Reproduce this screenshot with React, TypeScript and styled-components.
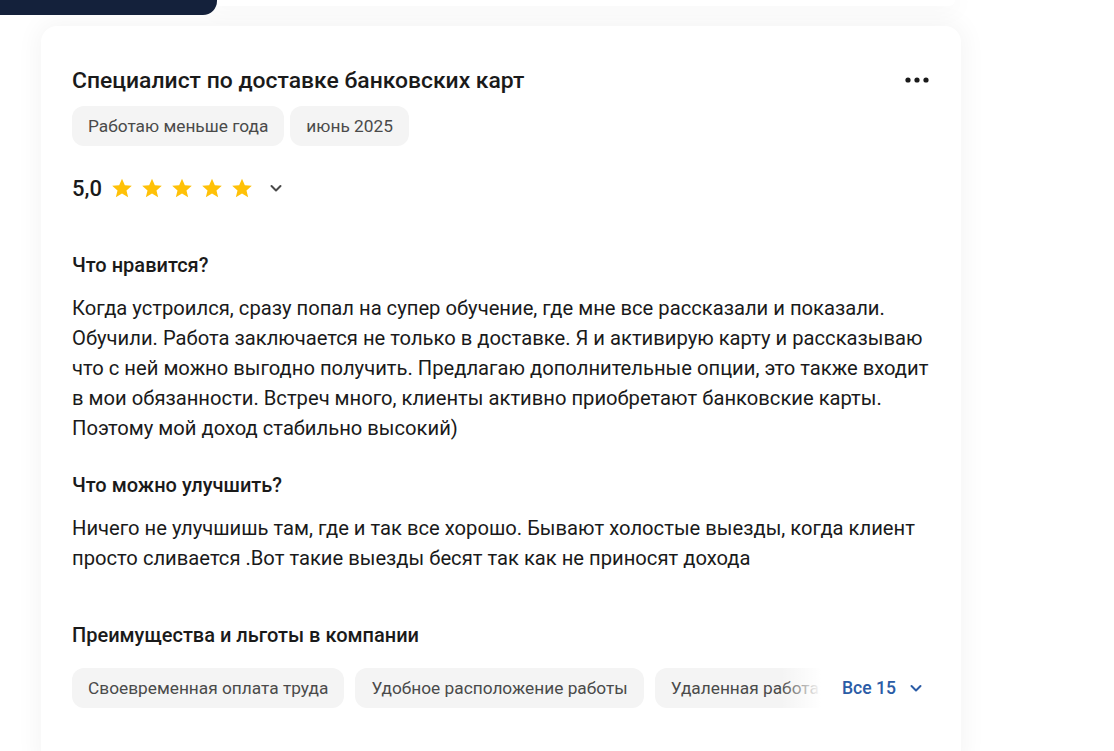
import styled, { createGlobalStyle } from 'styled-components';

const GlobalStyle = createGlobalStyle`
  body {
    margin: 0;
    background: #fff;
    font-family: Roboto, "Noto Sans", Arial, sans-serif;
    color: #1a1a1a;
  }
`;

const Page = styled.div`
  width: 1114px;
  height: 751px;
  overflow: hidden;
`;

const TopRow = styled.div`
  display: flex;
  align-items: flex-start;
`;

const DarkTab = styled.div`
  width: 217px;
  height: 15px;
  background: #14213b;
  border-bottom-right-radius: 14px;
  position: relative;
  z-index: 1;
`;

const PrevCard = styled.div`
  width: 742px;
  height: 6px;
  margin-left: -4px;
  background: #fff;
  border-bottom-right-radius: 14px;
  box-shadow: 0 0 24px 4px rgba(0, 0, 0, 0.045);
`;

const Card = styled.article`
  margin: 11px 0 0 41px;
  width: 920px;
  box-sizing: border-box;
  padding: 40px 23px 60px 31px;
  background: #fff;
  border-radius: 16px;
  box-shadow: 0 0 24px 4px rgba(0, 0, 0, 0.045);
`;

const Header = styled.div`
  display: flex;
  justify-content: space-between;
  align-items: flex-start;
  padding-right: 9px;
`;

const Title = styled.h2`
  margin: 0;
  font-size: 22.9px;
  line-height: 30px;
  font-weight: 500;
  color: #1a1a1a;
`;

const MoreButton = styled.button`
  border: 0;
  background: none;
  padding: 0;
  margin-top: 4px;
  width: 24px;
  height: 20px;
  display: flex;
  align-items: center;
  justify-content: center;
  cursor: pointer;
`;

const Tags = styled.div`
  display: flex;
  gap: 6px;
  margin-top: 10px;
`;

const Tag = styled.span`
  flex-shrink: 0;
  display: inline-flex;
  align-items: center;
  height: 40px;
  padding: 0 16px;
  border-radius: 12px;
  background: #f4f4f4;
  font-size: 17.3px;
  color: #4a4a4a;
  white-space: nowrap;
`;

const Rating = styled.div`
  display: flex;
  align-items: center;
  margin-top: 28px;
  height: 28px;
`;

const Score = styled.span`
  font-size: 22px;
  font-weight: 500;
  margin-right: 9px;
`;

const Stars = styled.div`
  display: flex;
  gap: 8px;
  margin-right: 16px;
`;

const Section = styled.section<{ $top: number }>`
  margin-top: ${({ $top }) => $top}px;
`;

const Heading = styled.h3`
  margin: 0;
  font-size: 20px;
  line-height: 24px;
  font-weight: 500;
`;

const Text = styled.p`
  margin: 16px 0 0;
  font-size: 20.2px;
  line-height: 30px;
  color: #1a1a1a;
`;

const Benefits = styled.div`
  display: flex;
  align-items: center;
  margin-top: 21px;
`;

const BenefitList = styled.div`
  position: relative;
  width: 759px;
  overflow: hidden;
  display: flex;
  gap: 11px;

  &::after {
    content: '';
    position: absolute;
    top: 0;
    right: 0;
    width: 50px;
    height: 100%;
    background: linear-gradient(to right, rgba(255, 255, 255, 0), #fff 80%);
  }
`;

const AllButton = styled.button`
  border: 0;
  background: none;
  padding: 0;
  margin-left: 11px;
  display: flex;
  align-items: center;
  gap: 13px;
  font-family: inherit;
  font-size: 17.6px;
  font-weight: 500;
  color: #2b5ca6;
  cursor: pointer;
`;

const Star = () => (
  <svg width="22" height="22" viewBox="0 0 24 24">
    <path
      fill="#ffc107"
      d="M12 1.8l3.1 7.1 7.6.7-5.8 5 1.8 7.5L12 18.1l-6.7 4 1.8-7.5-5.8-5 7.6-.7z"
    />
  </svg>
);

const Chevron = ({ color }: { color: string }) => (
  <svg width="14" height="14" viewBox="0 0 14 14">
    <path d="M2.5 5l4.5 4.5L11.5 5" fill="none" stroke={color} strokeWidth="2" strokeLinecap="round" strokeLinejoin="round" />
  </svg>
);

const Dots = () => (
  <svg width="24" height="6" viewBox="0 0 24 6">
    <circle cx="3" cy="3" r="2.6" fill="#1a1a1a" />
    <circle cx="12" cy="3" r="2.6" fill="#1a1a1a" />
    <circle cx="21" cy="3" r="2.6" fill="#1a1a1a" />
  </svg>
);

const benefits = ['Своевременная оплата труда', 'Удобное расположение работы', 'Удаленная работа'];

export default function App() {
  return (
    <Page>
      <GlobalStyle />
      <TopRow>
        <DarkTab />
        <PrevCard />
      </TopRow>
      <Card>
        <Header>
          <Title>Специалист по доставке банковских карт</Title>
          <MoreButton aria-label="Ещё">
            <Dots />
          </MoreButton>
        </Header>
        <Tags>
          <Tag>Работаю меньше года</Tag>
          <Tag>июнь 2025</Tag>
        </Tags>
        <Rating>
          <Score>5,0</Score>
          <Stars>
            {[0, 1, 2, 3, 4].map((i) => (
              <Star key={i} />
            ))}
          </Stars>
          <Chevron color="#4a4a4a" />
        </Rating>
        <Section $top={51}>
          <Heading>Что нравится?</Heading>
          <Text>
            Когда устроился, сразу попал на супер обучение, где мне все рассказали и показали. Обучили. Работа
            заключается не только в доставке. Я и активирую карту и рассказываю что с ней можно выгодно получить.
            Предлагаю дополнительные опции, это также входит в мои обязанности. Встреч много, клиенты активно
            приобретают банковские карты. Поэтому мой доход стабильно высокий)
          </Text>
        </Section>
        <Section $top={30}>
          <Heading>Что можно улучшить?</Heading>
          <Text>
            Ничего не улучшишь там, где и так все хорошо. Бывают холостые выезды, когда клиент просто сливается .Вот
            такие выезды бесят так как не приносят дохода
          </Text>
        </Section>
        <Section $top={50}>
          <Heading>Преимущества и льготы в компании</Heading>
          <Benefits>
            <BenefitList>
              {benefits.map((b) => (
                <Tag key={b}>{b}</Tag>
              ))}
            </BenefitList>
            <AllButton>
              Все 15
              <Chevron color="#2b5ca6" />
            </AllButton>
          </Benefits>
        </Section>
      </Card>
    </Page>
  );
}
